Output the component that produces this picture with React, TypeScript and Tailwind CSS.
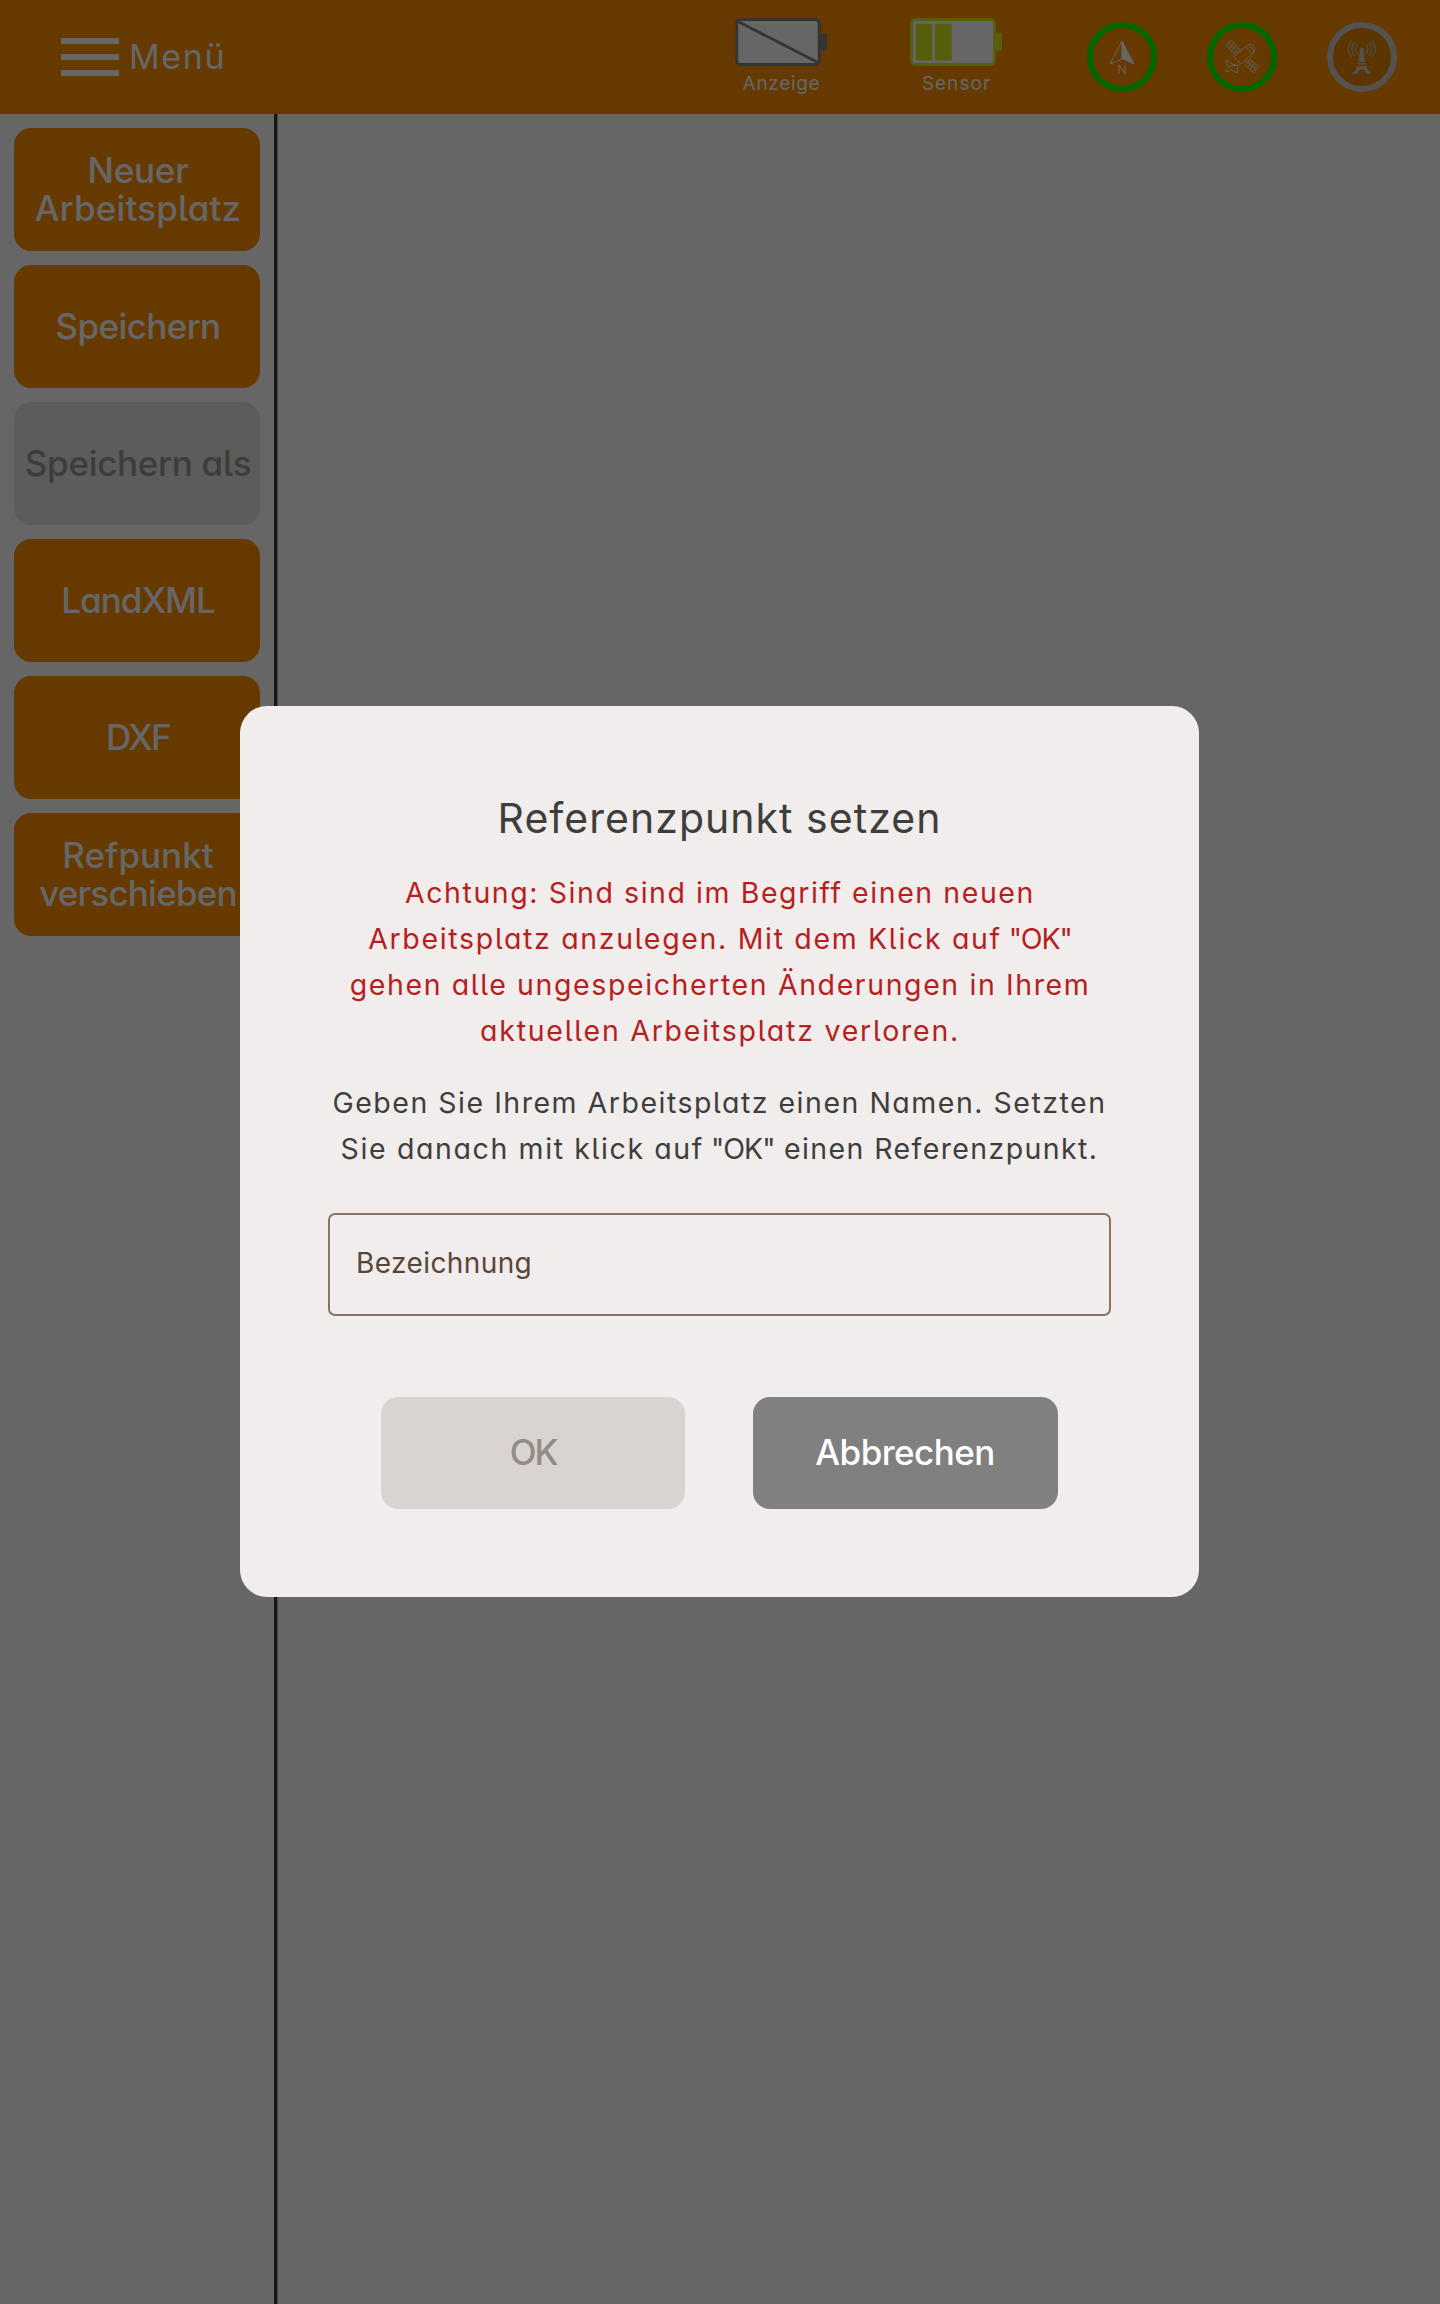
import type { ReactNode } from "react";

function Battery({ label, labelClass, children }: { label: string; labelClass: string; children: ReactNode }) {
  return (
    <div className="flex w-[92px] flex-col items-center pt-[18px]">
      <svg width="92" height="48" viewBox="0 0 92 48" fill="none">
        {children}
      </svg>
      <span className={`mt-[6px] pl-px text-[19px] leading-6 whitespace-nowrap text-white ${labelClass}`}>{label}</span>
    </div>
  );
}

function StatusRing({ ring, fill, children }: { ring: string; fill: string; children: ReactNode }) {
  return (
    <svg width="70" height="70" viewBox="0 0 70 70" fill="none">
      <circle cx="35" cy="35" r="32" stroke={ring} strokeWidth="6" fill={fill} />
      {children}
    </svg>
  );
}

function Header() {
  return (
    <header className="flex h-[114px] items-center bg-[#ff9000] pr-[43px] pl-[61px] text-white">
      <div className="flex flex-1 items-center gap-[10px]">
        <div className="flex w-[58px] flex-col gap-[10px]">
          <div className="h-[6px] bg-white" />
          <div className="h-[6px] bg-white" />
          <div className="h-[6px] bg-white" />
        </div>
        <span className="pb-[2px] text-[34px] tracking-[1.62px]">Menü</span>
      </div>
      <div className="flex h-full gap-[83px]">
        <Battery label="Anzeige" labelClass="tracking-[0.69px]">
          <rect x="1.8" y="1.5" width="82.4" height="45" rx="4" fill="#fff" stroke="#828282" strokeWidth="3" />
          <path d="M3 3.5 83 44.5" stroke="#828282" strokeWidth="2.8" />
          <path d="M85 15.5h5.5q1.5 0 1.5 1.5v14q0 1.5-1.5 1.5H85z" fill="#828282" />
        </Battery>
        <Battery label="Sensor" labelClass="tracking-[1.11px]">
          <rect x="1.5" y="1.5" width="83" height="45" rx="4" fill="#fff" stroke="#d8ec20" strokeWidth="2.8" />
          <rect x="5.7" y="5.8" width="16.6" height="36.6" rx="1.5" fill="#d8ec20" />
          <rect x="25" y="5.8" width="16.8" height="36.6" rx="1.5" fill="#d8ec20" />
          <path d="M85 15h5.8q1.2 0 1.2 1.2v15.6q0 1.2-1.2 1.2H85z" fill="#d8ec20" />
        </Battery>
      </div>
      <div className="ml-[85px] flex gap-[50px]">
        <StatusRing ring="#00ff00" fill="none">
          <path d="M35 19v17.8l12 5.2z" fill="#fff" stroke="#fff" strokeWidth="0.7" />
          <path d="M35 19 23 42l12-5.2z" stroke="#fff" strokeWidth="1" />
          <text x="35" y="51.5" textAnchor="middle" fontSize="12" fontWeight="300" fill="#fff">N</text>
        </StatusRing>
        <StatusRing ring="#00ff00" fill="none">
          <g stroke="#f4efe6" strokeWidth="1">
            <path d="M24 18.5 19 23.7l9.7 9.3 5-4.7zM21.5 21.1l9.7 9.5M21.9 26.5l5-5.2M24.3 28.8l5-5.2M26.5 31l5-5.2" />
            <path d="M38.5 25 27.3 34q-.8.8 0 1.500l6 6q.9.700 1.700 0L45.500 32z" />
            <path d="M38.500 25q4-4.500 7.700-1.500 3.300 4-.7 8.500M41.500 23.500q4 2 5.500 6" />
            <path d="M43 37.300l8.700 8-5 5.700-8.400-8.300zM40.600 40l8.600 8.200M45.200 39.400l-4.700 5.600M47.300 41.400l-4.800 5.600M49.500 43.400l-4.900 5.600" />
            <path d="M18.700 38.700q1.500 9.500 12 12.300-1-3.500.2-7.500-6-.5-9.200-4.300-1.500-1-3-.5zM23 44l6-.5M30.500 44l2.500-2.500M19.500 47v2.500h3" />
          </g>
        </StatusRing>
        <StatusRing ring="#d2cdc8" fill="#e68200">
          <g stroke="#c9c0b4" strokeWidth="1.2" strokeLinecap="round">
            <path d="M30.500 22q-3.800 5 0 10M27.300 20.300q-5 6.700 0 13.400M24.500 18.700q-6.500 8.300 0 16.600" />
            <path d="M39 22q3.800 5 0 10M42.200 20.300q5 6.700 0 13.400M45 18.700q6.500 8.300 0 16.600" />
          </g>
          <g fill="#d2cabf">
            <circle cx="34.8" cy="27.5" r="2.200" />
            <path d="M33 28h3.600l1.600 12.300h-6.800zM30.600 41h8.400v1.600h-8.400zM30 44h9.600l1.300 4 3.900 3.900h-5.500q-.8-4.400-4.500-4.400t-4.500 4.400h-5.400l3.900-3.900z" />
          </g>
        </StatusRing>
      </div>
    </header>
  );
}

const buttonBase =
  "flex h-[123px] w-[246px] flex-col items-center justify-center rounded-[17px] pb-[2px] pl-[2px] text-[35px] leading-[38px] font-[540] whitespace-nowrap";

function Sidebar() {
  return (
    <aside className="flex w-[277px] flex-col gap-[14px] border-r-[3px] border-[#3c3c3c] pt-[14px] pl-[14px] text-white">
      <button className={`${buttonBase} bg-[#ff9000] tracking-[-0.25px]`}>
        <span>Neuer</span>
        <span className="tracking-[0.16px]">Arbeitsplatz</span>
      </button>
      <button className={`${buttonBase} bg-[#ff9000] tracking-[-0.6px]`}>Speichern</button>
      <button className={`${buttonBase} bg-[#e6e5e0] tracking-[-0.3px] text-[#9b9894]`}>Speichern als</button>
      <button className={`${buttonBase} bg-[#ff9000] tracking-[-1px]`}>LandXML</button>
      <button className={`${buttonBase} bg-[#ff9000] tracking-[-1.6px]`}>DXF</button>
      <button className={`${buttonBase} bg-[#ff9000]`}>
        <span>Refpunkt</span>
        <span className="tracking-[-0.78px]">verschieben</span>
      </button>
    </aside>
  );
}

function ReferenceDialog() {
  return (
    <div
      role="dialog"
      className="mt-[706px] ml-[240px] flex h-[891px] w-[959px] flex-col rounded-[27px] bg-[#f1edec] px-[88px] pt-[88px] text-[#3e3e3d]"
    >
      <h1 className="text-center text-[41px] leading-[48px] tracking-[1.03px]">Referenzpunkt setzen</h1>
      <p className="mt-[28px] flex flex-col items-center pl-px text-[28.5px] leading-[46px] whitespace-nowrap text-[#b51f1f]">
        <span className="tracking-[1.57px]">Achtung: Sind sind im Begriff einen neuen</span>
        <span className="tracking-[1.67px]">
          Arbeitsplatz anzulegen. Mit dem Klick auf<span className="tracking-[-1.1px]"> "OK"</span>
        </span>
        <span className="tracking-[1.6px]">gehen alle ungespeicherten Änderungen in Ihrem</span>
        <span className="tracking-[1.76px]">aktuellen Arbeitsplatz verloren.</span>
      </p>
      <p className="mt-[26px] flex flex-col items-center text-[28.5px] leading-[46px] whitespace-nowrap">
        <span className="tracking-[1.51px]">Geben Sie Ihrem Arbeitsplatz einen Namen. Setzten</span>
        <span className="tracking-[1.62px]">
          Sie danach mit klick auf<span className="tracking-[-1px]"> "OK"</span>
          <span className="tracking-[1.4px]"> einen Referenzpunkt.</span>
        </span>
      </p>
      <div className="mt-[41px] flex h-[103px] items-center rounded-[7px] border-2 border-[#8a7365] pb-[3px] pl-[26px] text-[28px] tracking-[0.4px] text-[#584638]">
        Bezeichnung
      </div>
      <div className="mt-[81px] flex gap-[68px] pl-[53px] text-[35px] font-[540]">
        <button className="h-[112px] w-[304px] rounded-[17px] bg-[#d9d3d2] pb-[2px] tracking-[-2.2px] text-[#928c84]">
          OK
        </button>
        <button className="h-[112px] w-[305px] rounded-[17px] bg-[#808080] pr-px pb-[2px] tracking-[-0.55px] text-white">
          Abbrechen
        </button>
      </div>
    </div>
  );
}

export default function App() {
  return (
    <div className="relative flex h-[2304px] w-[1440px] flex-col overflow-hidden bg-white font-['Inter',sans-serif] [font-feature-settings:'cv11','cv05']">
      <Header />
      <main className="flex flex-1">
        <Sidebar />
        <section className="flex-1 border-l border-[#a8a8a8]" />
      </main>
      <div className="absolute inset-0 bg-black/60">
        <ReferenceDialog />
      </div>
    </div>
  );
}
